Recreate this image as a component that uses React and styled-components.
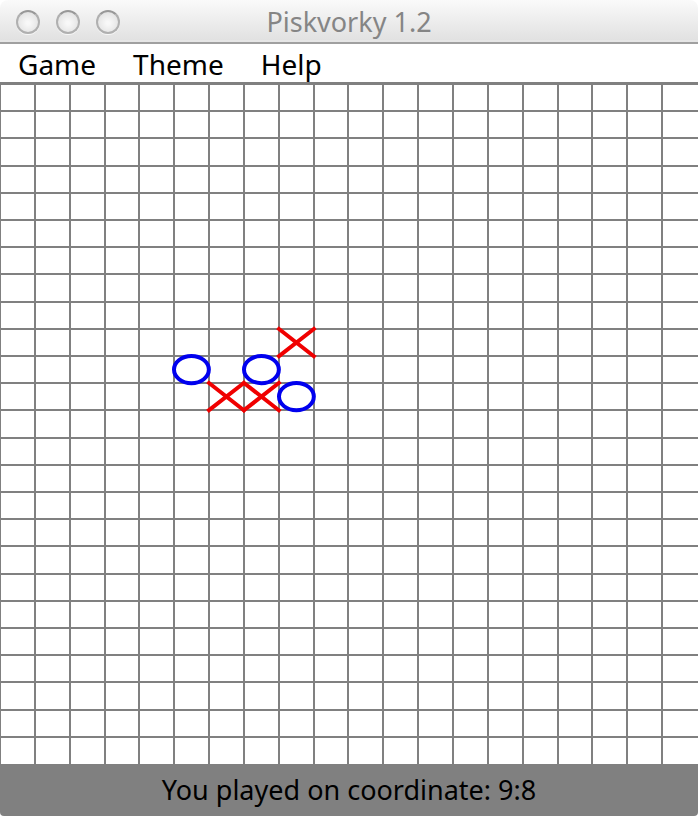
import React, { useState } from "react";
import styled, { createGlobalStyle } from "styled-components";

const GlobalStyle = createGlobalStyle`
  *, *::before, *::after { box-sizing: border-box; }
  body { margin: 0; background: #fff; }
  button { font: inherit; color: inherit; border: 0; padding: 0; }
`;

const Window = styled.div`
  display: flex;
  flex-direction: column;
  min-height: 100vh;
  overflow: hidden;
  border-radius: 8px 8px 4px 4px;
  font-family: "Noto Sans", "Open Sans", sans-serif;
  font-size: 27px;
  line-height: 32px;
  color: #000;
`;

const TitleBar = styled.header`
  display: grid;
  grid-template-columns: 1fr auto 1fr;
  align-items: center;
  height: 44px;
  padding: 2px 16px 0;
  background: linear-gradient(#fafafa, #e0e0e0);
  border-bottom: 2px solid #a0a0a0;
  box-shadow: inset 0 -2px #e6e6e6;
`;

const WindowControls = styled.div`
  display: flex;
  gap: 16px;
`;

const WindowButton = styled.button`
  width: 24px;
  height: 24px;
  border-radius: 50%;
  border: 2px solid #b0b0b0;
  border-top-color: #989898;
  background: radial-gradient(circle at 50% 55%, #f8f8f8 10%, #e8e8e8 60%, #d8d8d8 100%);
  box-shadow: 0 1px #f8f8f8;
`;

const Title = styled.h1`
  margin: 0;
  font-size: 27px;
  font-weight: 400;
  color: #858585;
`;

const MenuBar = styled.nav`
  display: flex;
  align-items: flex-start;
  gap: 37px;
  height: 41px;
  padding: 2px 18px 0;
  background: #fff;
  border-bottom: 3px solid #808080;
  font-size: 28px;
`;

const MenuButton = styled.button`
  height: 36px;
  background: none;
`;

const Board = styled.main`
  flex: 1;
  display: grid;
  grid-template-columns: repeat(20, minmax(0, 1fr));
  grid-template-rows: repeat(25, minmax(16px, 1fr));
  gap: 2px;
  padding: 0 2px 1px 1px;
  background: #808080;
`;

const Cell = styled.button`
  position: relative;
  background: #fff;

  /* The outermost cells run to the edge of the board. */
  &:nth-child(20n) { margin-right: -2px; }
  &:nth-last-child(-n + 20) { margin-bottom: -1px; }
`;

const Mark = styled.svg`
  position: absolute;
  z-index: 1;
  top: -1px;
  left: -1px;
  width: calc(100% + 2px);
  height: calc(100% + 2px);
  overflow: visible;
  fill: none;
  stroke: ${({ $color }) => $color};
  stroke-width: 4px;
  pointer-events: none;

  & > * { vector-effect: non-scaling-stroke; }
`;

const StatusBar = styled.footer`
  height: 52px;
  padding-top: 10px;
  background: #808080;
  text-align: center;
`;

const COLUMNS = 20;
const ROWS = 25;

const opening = {
  "8:9": "X",
  "5:10": "O",
  "7:10": "O",
  "6:11": "X",
  "7:11": "X",
  "8:11": "O",
};

function Piece({ kind }) {
  return (
    <Mark
      $color={kind === "X" ? "#f00000" : "#0000ee"}
      viewBox="0 0 100 100"
      preserveAspectRatio="none"
      aria-hidden="true"
    >
      {kind === "X" ? (
        <path d="M0 0L100 100M100 0L0 100" strokeLinecap="square" />
      ) : (
        <ellipse cx="50" cy="50" rx="50" ry="50" />
      )}
    </Mark>
  );
}

export default function App() {
  const [pieces, setPieces] = useState(opening);
  const [last, setLast] = useState("9:8");

  const play = (x, y) => {
    const key = `${x}:${y}`;
    if (pieces[key]) return;
    const kind = Object.keys(pieces).length % 2 ? "O" : "X";
    setPieces({ ...pieces, [key]: kind });
    setLast(`${y}:${x}`);
  };

  return (
    <>
      <GlobalStyle />
      <Window>
        <TitleBar>
          <WindowControls>
            <WindowButton aria-label="Close" />
            <WindowButton aria-label="Minimize" />
            <WindowButton aria-label="Zoom" />
          </WindowControls>
          <Title>Piskvorky 1.2</Title>
        </TitleBar>
        <MenuBar>
          <MenuButton>Game</MenuButton>
          <MenuButton>Theme</MenuButton>
          <MenuButton>Help</MenuButton>
        </MenuBar>
        <Board>
          {Array.from({ length: COLUMNS * ROWS }, (_, i) => {
            const x = i % COLUMNS;
            const y = Math.floor(i / COLUMNS);
            const kind = pieces[`${x}:${y}`];
            return (
              <Cell key={i} aria-label={`${y}:${x} ${kind || "empty"}`} onClick={() => play(x, y)}>
                {kind && <Piece kind={kind} />}
              </Cell>
            );
          })}
        </Board>
        <StatusBar role="status">You played on coordinate: {last}</StatusBar>
      </Window>
    </>
  );
}
